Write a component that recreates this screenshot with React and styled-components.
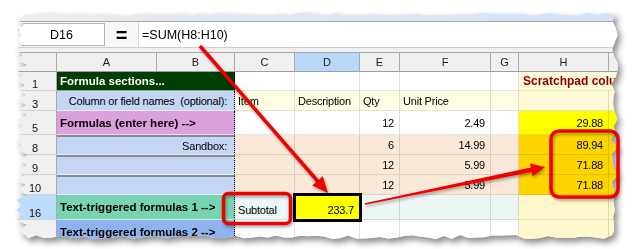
import styled, { createGlobalStyle } from "styled-components";

const GlobalStyle = createGlobalStyle`
  *, *::before, *::after { box-sizing: border-box; }
  html, body { margin: 0; padding: 0; background: #fff; }
  body { font-family: "Liberation Sans", Arial, sans-serif; color: #000; }
`;

const Page = styled.div`
  position: relative;
  width: 638px;
  height: 249px;
  overflow: hidden;
  background: #fff;
`;

const Shadow = styled.div`
  padding: 12px 0 0 14px;
  filter: drop-shadow(3px 4px 3px rgba(0, 0, 0, 0.45));
`;

const Sheet = styled.div`
  width: 608px;
  height: 228px;
  display: flex;
  flex-direction: column;
  background: #fff;
  overflow: hidden;
  clip-path: ${(p) => p.$clip};
`;

const TopStrip = styled.div`
  height: 10px;
  flex: none;
  background: linear-gradient(90deg, #ececec 0%, #e2e9f2 35%, #d4e3f5 100%);
  border-bottom: 1px solid #a9a9a9;
`;

const FormulaBar = styled.div`
  height: 26px;
  flex: none;
  display: flex;
  align-items: center;
  padding-left: 4px;
  background: #f8f8f8;
  border-bottom: 1px solid #cfcfcf;
`;

const NameBox = styled.div`
  width: 87px;
  height: 23px;
  display: flex;
  align-items: center;
  justify-content: center;
  background: #fff;
  border: 1px solid #b4b4b4;
  font-size: 12.5px;
`;

const Equals = styled.div`
  width: 33px;
  text-align: center;
  font-size: 20px;
  font-weight: bold;
  line-height: 1;
`;

const FormulaInput = styled.div`
  flex: 1;
  align-self: stretch;
  display: flex;
  align-items: center;
  padding-left: 3px;
  background: #fff;
  border-left: 1px solid #d8d8d8;
  font-size: 12.5px;
`;

const Gap = styled.div`
  height: 4px;
  flex: none;
  background: #f0f0f0;
`;

const Grid = styled.div`
  display: grid;
  grid-template-columns: 43px 100px 78px 60px 65px 40px 91px 28px 90px 13px;
  grid-template-rows: 20px 19px 20px 24px 20px 20px 20px 25px 24px;
  font-size: 11px;
`;

const Corner = styled.div`
  background: #f0f0f0;
  border-top: 1px solid #a9a9a9;
  border-right: 1px solid #a9a9a9;
  border-bottom: 1px solid #a0a0a0;
`;

const ColHead = styled.div`
  display: flex;
  align-items: center;
  justify-content: center;
  background: ${(p) => (p.$active ? "#b8d8f9" : "#f0f0f0")};
  border-top: 1px solid #a9a9a9;
  border-right: 1px solid #a9a9a9;
  border-bottom: 1px solid #a0a0a0;
  color: #222;
`;

const RowHead = styled.div`
  display: flex;
  align-items: flex-end;
  justify-content: center;
  line-height: 11px;
  background: ${(p) => (p.$active ? "#bcdcfb" : "#f0f0f0")};
  border-right: 1px solid #a9a9a9;
  border-bottom: 1px solid #d4d4d4;
  color: #111;
`;

const Label = styled.div`
  grid-column: span 2;
  display: flex;
  align-items: center;
  justify-content: ${(p) => (p.$right ? "flex-end" : "flex-start")};
  padding: 0 7px 0 3px;
  background: ${(p) => p.$bg};
  color: ${(p) => p.$color || "#000"};
  font-weight: ${(p) => (p.$bold ? "bold" : "normal")};
  font-size: ${(p) => (p.$bold ? "11.5px" : "11px")};
  letter-spacing: ${(p) => (p.$bold ? "0" : "-0.2px")};
  white-space: pre;
  overflow: hidden;
  border-right: 1px dotted #000;
  border-top: ${(p) => (p.$sep ? "2px solid #8c8c8c" : "none")};
  border-bottom: 1px solid rgba(255, 255, 255, 0.55);
`;

const Cell = styled.div`
  display: flex;
  align-items: ${(p) => (p.$bottom ? "flex-end" : "center")};
  justify-content: ${(p) => (p.$right ? "flex-end" : "flex-start")};
  padding: 0 5px ${(p) => (p.$bottom ? "3px" : "0")} 3px;
  background: ${(p) => p.$bg};
  border-right: 1px solid rgba(0, 0, 0, 0.12);
  border-bottom: 1px solid rgba(0, 0, 0, 0.1);
  letter-spacing: -0.2px;
  white-space: nowrap;
  ${(p) =>
    p.$boxed &&
    `
    position: relative;
    z-index: 1;
    outline: 3px solid #000;
    outline-offset: -1px;
  `}
`;

const Title = styled.div`
  grid-column: span 2;
  display: flex;
  align-items: center;
  padding-left: 4px;
  background: ${(p) => p.$bg};
  color: #8a0000;
  font-weight: bold;
  font-size: 12px;
  white-space: nowrap;
  overflow: hidden;
  border-bottom: 1px solid rgba(0, 0, 0, 0.08);
`;

const Marks = styled.svg`
  position: absolute;
  top: 0;
  left: 0;
  pointer-events: none;
  filter: drop-shadow(1.5px 2px 1.5px rgba(0, 0, 0, 0.35));
`;

function tornEdge(w, h) {
  let seed = 11;
  const rnd = () => {
    seed = (seed * 9301 + 49297) % 233280;
    return seed / 233280;
  };
  const pts = [];
  for (let x = 6; x <= w - 10; x += 9) pts.push([x, 0.5 + rnd() * 3]);
  for (let y = 2; y <= h - 6; y += 7) pts.push([w - 4 - rnd() * 7, y]);
  for (let x = w - 10; x >= 10; x -= 8) pts.push([x, h - 1 - rnd() * 4]);
  let i = 0;
  for (let y = h - 5; y >= 3; y -= 5) {
    pts.push([i % 2 ? 2 + rnd() * 4 : 7 + rnd() * 7, y]);
    i++;
  }
  return `polygon(${pts
    .map(([x, y]) => `${x.toFixed(1)}px ${y.toFixed(1)}px`)
    .join(", ")})`;
}

const CLIP = tornEdge(608, 228);

const COLS = ["A", "B", "C", "D", "E", "F", "G", "H", ""];

const LBLUE = "#c5d6f5";
const PEACH = "#fbe9d7";
const GOLD = "#ffd500";

// last row's number sits below the torn bottom edge, so it is left out
const rows = [
  { id: 1, n: "1", label: "Formula sections...", lbg: "#003d00", lcolor: "#fff", bold: true, cbg: "#fff", cells: [], hbg: "#fffad6", title: "Scratchpad columns" },
  { id: 3, n: "3", label: "Column or field names  (optional):", lbg: LBLUE, right: true, cbg: "#fffde4", cells: ["Item", "Description", "Qty", "Unit Price"], hbg: "#fffad6" },
  { id: 5, n: "5", label: "Formulas (enter here) -->", lbg: "#dca0dc", bold: true, cbg: "#fff", cells: ["", "", "12", "2.49"], hbg: "#ffff00", h: "29.88" },
  { id: 8, n: "8", label: "Sandbox:", lbg: LBLUE, right: true, sep: true, cbg: PEACH, cells: ["", "", "6", "14.99"], hbg: GOLD, h: "89.94" },
  { id: 9, n: "9", label: "", lbg: LBLUE, sep: true, cbg: PEACH, cells: ["", "", "12", "5.99"], hbg: GOLD, h: "71.88" },
  { id: 10, n: "10", label: "", lbg: LBLUE, sep: true, cbg: PEACH, cells: ["", "", "12", "5.99"], hbg: GOLD, h: "71.88" },
  { id: 16, n: "16", active: true, label: "Text-triggered formulas 1 -->", lbg: "#78d4b0", bold: true, cbg: "#ecf7f5", cells: ["Subtotal", "233.7"], hbg: "#fff8cc", boxed: 1 },
  { id: 17, n: "", label: "Text-triggered formulas 2 -->", lbg: "#8fb3ef", bold: true, cbg: "#fff", cells: [], hbg: "#fff8cc" },
];

const isNum = (t) => /^[\d.]+$/.test(t);

function SheetRow({ row }) {
  const cells = [0, 1, 2, 3, 4].map((i) => row.cells[i] || "");
  return (
    <>
      <RowHead $active={row.active}>{row.n}</RowHead>
      <Label $bg={row.lbg} $color={row.lcolor} $bold={row.bold} $right={row.right} $sep={row.sep}>
        {row.label}
      </Label>
      {cells.map((t, i) => {
        const boxed = row.boxed === i;
        return (
          <Cell
            key={i}
            $bg={boxed ? "#ffff00" : row.cbg}
            $right={isNum(t)}
            $bottom={row.active}
            $boxed={boxed}
          >
            {t}
          </Cell>
        );
      })}
      {row.title ? (
        <Title $bg={row.hbg}>{row.title}</Title>
      ) : (
        <>
          <Cell $bg={row.hbg} $right>
            {row.h || ""}
          </Cell>
          <Cell $bg={row.hbg} />
        </>
      )}
    </>
  );
}

export default function App() {
  return (
    <Page>
      <GlobalStyle />
      <Shadow>
        <Sheet $clip={CLIP}>
          <TopStrip />
          <FormulaBar>
            <NameBox>D16</NameBox>
            <Equals>=</Equals>
            <FormulaInput>=SUM(H8:H10)</FormulaInput>
          </FormulaBar>
          <Gap />
          <Grid>
            <Corner />
            {COLS.map((c, i) => (
              <ColHead key={i} $active={c === "D"}>
                {c}
              </ColHead>
            ))}
            {rows.map((r) => (
              <SheetRow key={r.id} row={r} />
            ))}
          </Grid>
        </Sheet>
      </Shadow>
      <Marks width="638" height="249" viewBox="0 0 638 249">
        <line x1="200" y1="46" x2="318" y2="181.5" stroke="#f00000" strokeWidth="3.5" />
        <polygon points="328,193 312.2,185.5 322.8,176.3" fill="#f00000" />
        <rect x="223.5" y="193.5" width="67" height="30" rx="5" fill="none" stroke="#f00000" strokeWidth="3.5" />
        <polygon
          points="364.8,203.2 530.9,167.6 530,163.4 545,167 532.6,176.2 531.7,172 365.2,204.8"
          fill="#f00000"
        />
        <rect x="551" y="131" width="67" height="66" rx="8" fill="none" stroke="#f00000" strokeWidth="3.5" />
      </Marks>
    </Page>
  );
}
